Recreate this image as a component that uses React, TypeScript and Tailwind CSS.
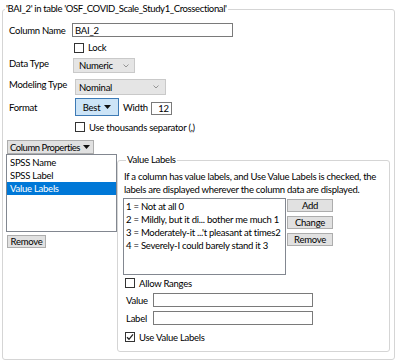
import React from "react";

const Check = ({ checked = false }: { checked?: boolean }) => (
  <span className="w-[10px] h-[10px] border border-[#333333] bg-white flex items-center justify-center shrink-0">
    {checked && (
      <svg width="8" height="8" viewBox="0 0 8 8">
        <path d="M1 4.2 L3 6.3 L7 1.3" fill="none" stroke="#222" strokeWidth="1.3" />
      </svg>
    )}
  </span>
);

const Chevron = () => (
  <svg width="6" height="4" viewBox="0 0 6 4">
    <path d="M0.5 0.5 L3 3 L5.5 0.5" fill="none" stroke="#8a8a8a" strokeWidth="0.9" />
  </svg>
);

const Tri = () => (
  <svg width="7" height="4" viewBox="0 0 7 4" className="shrink-0">
    <path d="M0 0 L7 0 L3.5 4 Z" fill="#111" />
  </svg>
);

export default function App() {
  return (
    <div className="w-[400px] h-[361px] overflow-hidden bg-white text-black text-[9.5px] leading-[13px] font-['Lato',sans-serif] tracking-[-0.25px] whitespace-nowrap pt-[3px] pl-[2px]">
      <fieldset className="w-[393px] h-[357px] border border-[#d5d5d5] rounded-[3px] flex flex-col">
        <legend className="ml-[2px] px-[1px] leading-[12px] tracking-[-0.37px]">
          'BAI_2' in table 'OSF_COVID_Scale_Study1_Crossectional'
        </legend>

        {/* Column Name */}
        <div className="flex items-center mt-[8px] ml-[6px]">
          <span className="w-[63px]">Column Name</span>
          <div className="w-[161px] h-[14px] border border-[#7a7a7a] pl-[2px] flex items-center">BAI_2</div>
        </div>

        {/* Lock */}
        <div className="flex items-center gap-[4px] mt-[5px] ml-[71px] h-[11px]">
          <Check />
          <span>Lock</span>
        </div>

        {/* Data Type */}
        <div className="flex items-start mt-[5px] ml-[6px]">
          <span className="w-[64px] mt-[-1px]">Data Type</span>
          <div className="w-[62px] h-[15px] bg-[#e5e5e5] border border-[#c9c9c9] pl-[5px] pr-[5px] flex items-center justify-between">
            <span>Numeric</span>
            <Chevron />
          </div>
        </div>

        {/* Modeling Type */}
        <div className="flex items-start mt-[6px] ml-[6px]">
          <span className="w-[66px] mt-[-1px]">Modeling Type</span>
          <div className="w-[91px] h-[16px] bg-[#e5e5e5] border border-[#c9c9c9] pl-[3px] pr-[6px] flex items-center justify-between">
            <span>Nominal</span>
            <Chevron />
          </div>
        </div>

        {/* Format */}
        <div className="flex items-start mt-[3px] ml-[6px]">
          <span className="w-[66px] mt-[3px]">Format</span>
          <div className="w-[44px] h-[18px] bg-[#cce4f7] border border-[#3d7ab5] flex items-center justify-center gap-[4px]">
            <span>Best</span>
            <Tri />
          </div>
          <span className="ml-[4px] mt-[3px]">Width</span>
          <div className="ml-[3px] mt-[4px] w-[21px] h-[13px] border border-[#7a7a7a] pr-[2px] flex items-center justify-end">12</div>
        </div>

        {/* thousands */}
        <div className="flex items-center gap-[4px] mt-[6px] ml-[72px] h-[10px]">
          <Check />
          <span>Use thousands separator (,)</span>
        </div>

        {/* Column properties */}
        <div className="mt-[8px] ml-[4px] w-[87px] h-[14px] bg-[#e1e1e1] border border-[#adadad] flex items-center justify-between pl-[2px] pr-[3px]">
          <span className="tracking-[-0.45px]">Column Properties</span>
          <Tri />
        </div>

        <div className="flex items-start ml-[3px]">
          {/* Left column */}
          <div className="flex flex-col">
            <div className="w-[111px] h-[78px] border border-[#828790] pt-[1px] flex flex-col">
              <div className="h-[13px] pl-[3px] flex items-center">SPSS Name</div>
              <div className="h-[13px] pl-[3px] flex items-center">SPSS Label</div>
              <div className="h-[13px] pl-[3px] flex items-center bg-[#0078d7] text-white">Value Labels</div>
            </div>
            <div className="mt-[3px] ml-[1px] w-[39px] h-[13px] bg-[#e1e1e1] border border-[#adadad] flex items-center justify-center">
              Remove
            </div>
          </div>

          {/* Value Labels group */}
          <fieldset className="w-[273px] h-[198px] border border-[#d5d5d5] rounded-[3px] pl-[5px] flex flex-col">
            <legend className="ml-[3px] px-[1px] leading-[12px]">Value Labels</legend>
            <div className="mt-[4px] ml-[1px]">
              If a column has value labels, and Use Value Labels is checked, the
              <br />
              labels are displayed wherever the column data are displayed.
            </div>
            <div className="flex items-start mt-[2px]">
              <div className="w-[163px] h-[77px] border border-[#828790] pt-[1px] pl-[2px] overflow-hidden">
                <div className="h-[13px] flex items-center">1 = Not at all 0</div>
                <div className="h-[13px] flex items-center">2 = Mildly, but it di... bother me much 1</div>
                <div className="h-[13px] flex items-center">3 = Moderately-it ...'t pleasant at times2</div>
                <div className="h-[13px] flex items-center">4 = Severely-I could barely stand it 3</div>
              </div>
              <div className="flex flex-col ml-[1px] mt-[1px] gap-[4px]">
                <div className="w-[46px] h-[13px] bg-[#e1e1e1] border border-[#adadad] flex items-center justify-center">Add</div>
                <div className="w-[46px] h-[13px] bg-[#e1e1e1] border border-[#adadad] flex items-center justify-center">Change</div>
                <div className="w-[46px] h-[13px] bg-[#e1e1e1] border border-[#adadad] flex items-center justify-center">Remove</div>
              </div>
            </div>
            <div className="flex items-center gap-[4px] mt-[3px] ml-[2px] h-[10px]">
              <Check />
              <span>Allow Ranges</span>
            </div>
            <div className="flex items-center mt-[5px] ml-[3px]">
              <span className="w-[27px]">Value</span>
              <div className="w-[160px] h-[14px] border border-[#7a7a7a]" />
            </div>
            <div className="flex items-center mt-[4px] ml-[3px]">
              <span className="w-[27px]">Label</span>
              <div className="w-[160px] h-[14px] border border-[#7a7a7a]" />
            </div>
            <div className="flex items-center gap-[4px] mt-[7px] ml-[2px] h-[10px]">
              <Check checked />
              <span>Use Value Labels</span>
            </div>
          </fieldset>
        </div>
      </fieldset>
    </div>
  );
}
